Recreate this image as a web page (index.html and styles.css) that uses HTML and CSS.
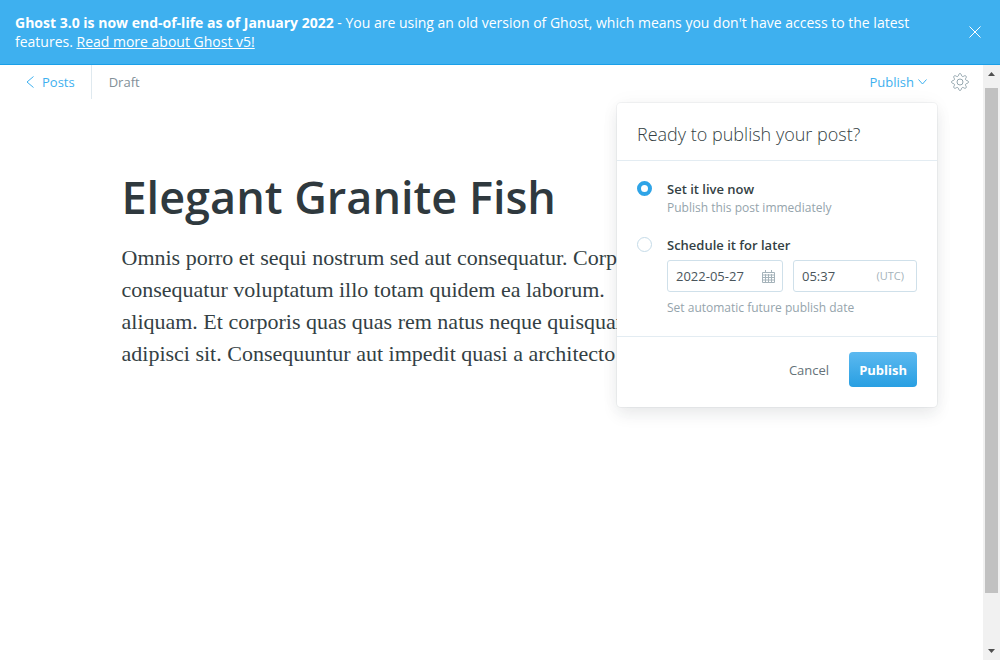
FILE: index.html
```html
<!DOCTYPE html>
<html lang="en">
<head>
<meta charset="utf-8">
<meta name="viewport" content="width=device-width, initial-scale=1">
<title>Elegant Granite Fish - Ghost</title>
<link rel="stylesheet" href="styles.css">
</head>
<body>
<aside class="alert">
  <p class="alert-text"><strong>Ghost 3.0 is now end-of-life as of January 2022</strong> - You are using an old version of Ghost, which means you don't have access to the latest features. <a href="#">Read more about Ghost v5!</a></p>
  <button class="alert-close" type="button" aria-label="Close">
    <svg width="12" height="12" viewBox="0 0 12 12"><path d="M.5.5l11 11M11.5.5l-11 11"/></svg>
  </button>
</aside>
<div class="viewport">
  <main class="editor">
    <header class="editor-header">
      <a class="back" href="#"><svg width="8" height="12" viewBox="0 0 8 12"><path d="M7.5.5L1 6l6.500 5.500"/></svg>Posts</a>
      <span class="status">Draft</span>
      <div class="publish-menu">
        <button class="publish-trigger" type="button" aria-expanded="true">Publish<svg width="9" height="6" viewBox="0 0 9 6"><path d="M.5.500l4 4.500 4-4.500"/></svg></button>
        <form class="dropdown">
          <h2 class="dropdown-title">Ready to publish your post?</h2>
          <div class="options">
            <div class="option">
              <input class="radio" type="radio" name="when" id="now" checked>
              <div class="option-body">
                <label class="option-label" for="now">Set it live now</label>
                <p class="option-desc">Publish this post immediately</p>
              </div>
            </div>
            <div class="option">
              <input class="radio" type="radio" name="when" id="later">
              <div class="option-body">
                <label class="option-label" for="later">Schedule it for later</label>
                <div class="datetime">
                  <div class="field">
                    <input type="text" value="2022-05-27" aria-label="Date">
                    <svg width="13" height="13" viewBox="0 0 13 13"><path d="M.5 2.500h12v10H.5zM.5 5h12M.5 7.500h12M.5 10h12M3.500 4v8.500M6.500 4v8.500M9.500 4v8.500M3.500 0v2.500M9.500 0v2.500"/></svg>
                  </div>
                  <div class="field field-time">
                    <input type="text" value="05:37" aria-label="Time">
                    <small class="zone">(UTC)</small>
                  </div>
                </div>
                <p class="option-desc">Set automatic future publish date</p>
              </div>
            </div>
          </div>
          <footer class="dropdown-footer">
            <button class="cancel" type="button">Cancel</button>
            <button class="publish" type="submit">Publish</button>
          </footer>
        </form>
      </div>
      <button class="settings" type="button" aria-label="Settings">
        <svg width="18" height="18" viewBox="0 0 24 24"><circle cx="12" cy="12" r="4"/><path d="M10 3.200C10.300 1.800 10.700.8 12 .8s1.700 1 2 2.400c.3 1.400 1.500 1.900 2.800 1.200 1.200-.8 2.200-1.200 3.100-.3s.5 1.900-.3 3.100c-.7 1.300-.2 2.400 1.200 2.700s2.400.8 2.400 2.100-1 1.800-2.400 2.100-1.900 1.400-1.200 2.700c.8 1.200 1.200 2.200.3 3.100s-1.900.5-3.100-.3c-1.300-.7-2.500-.2-2.800 1.200s-.7 2.400-2 2.400-1.700-1-2-2.400-1.500-1.900-2.800-1.200c-1.200.8-2.200 1.200-3.100.3s-.5-1.900.3-3.100c.7-1.300.2-2.400-1.200-2.700S.8 13.300.8 12s1-1.800 2.400-2.100 1.900-1.400 1.200-2.700c-.8-1.200-1.200-2.200-.3-3.100s1.900-.5 3.100.3c1.300.7 2.500.2 2.800-1.200z"/></svg>
      </button>
    </header>
    <article class="post">
      <h1 class="post-title">Elegant Granite Fish</h1>
      <p class="post-body">Omnis porro et sequi nostrum sed aut consequatur. Corporis<br>consequatur voluptatum illo totam quidem ea laborum.<br>aliquam. Et corporis quas quas rem natus neque quisquam<br>adipisci sit. Consequuntur aut impedit quasi a architecto</p>
    </article>
  </main>
  <div class="scrollbar" aria-hidden="true">
    <svg width="7" height="4" viewBox="0 0 7 4"><path d="M0 4L3.500 0 7 4z"/></svg>
    <div class="track"><div class="thumb"></div></div>
    <svg width="7" height="4" viewBox="0 0 7 4"><path d="M0 0l3.500 4L7 0z"/></svg>
  </div>
</div>
</body>
</html>
```
FILE: styles.css
```css
* { box-sizing: border-box; }
body {
  margin: 0;
  height: 100vh;
  display: flex;
  flex-direction: column;
  background: #fff;
  color: #343f44;
  font: 13px/18px "Open Sans", "Noto Sans", sans-serif;
}
p, h1, h2 { margin: 0; }
button { padding: 0; border: 0; background: none; font: inherit; cursor: pointer; }
svg { display: block; fill: none; stroke: currentColor; flex: none; }

.alert {
  display: flex;
  align-items: center;
  gap: 48px;
  padding: 13px 14px 13px 15px;
  background: #3eb0ef;
  border-bottom: 1px solid #1a9fe8;
  color: #fff;
  font-size: 14px;
  line-height: 19px;
}
.alert-text { flex: 1; }
.alert-text a { color: inherit; text-decoration: underline; }
.alert-close { padding: 0 5px; color: #fff; }

.viewport { flex: 1; display: flex; min-height: 0; }
.editor { flex: 1; min-width: 0; }
.editor-header {
  display: flex;
  align-items: center;
  height: 34px;
  padding: 0 14px 0 26px;
}
.back {
  display: flex;
  align-items: center;
  gap: 8px;
  align-self: stretch;
  padding-right: 16px;
  border-right: 1px solid #dfe9ef;
  color: #3eb0ef;
  text-decoration: none;
}
.status { padding-left: 17px; color: #839098; }
.publish-menu { position: relative; margin-left: auto; }
.publish-trigger { display: flex; align-items: center; gap: 4px; color: #3eb0ef; }
.settings { margin-left: 24px; color: #738a94; }

.dropdown {
  position: absolute;
  z-index: 2;
  top: 30px;
  right: -10px;
  width: 320px;
  background: #fff;
  border-radius: 4px;
  box-shadow: 0 0 0 1px rgba(99, 114, 130, .07), 0 8px 16px rgba(27, 39, 51, .08), 0 0 20px rgba(27, 39, 51, .04);
}
.dropdown-title {
  padding: 19px 20px 14px;
  border-bottom: 1px solid #e3ecf2;
  font-size: 18px;
  line-height: 24px;
  font-weight: 300;
}
.options { display: grid; gap: 18px; padding: 19px 20px 18px; }
.option { display: flex; gap: 15px; }
.option-body { flex: 1; }
.option-label { display: block; font-weight: 600; }
.option-desc { color: #95a4ac; font-size: 12px; line-height: 20px; }
.radio {
  appearance: none;
  flex: none;
  width: 15px;
  height: 15px;
  margin: 1px 0 0;
  border: 1px solid #c5dbe8;
  border-radius: 50%;
}
.radio:checked { border: 4px solid #2fa4e7; }
.datetime { display: grid; grid-template-columns: 116fr 124fr; gap: 10px; margin: 6px 0; }
.field {
  display: flex;
  align-items: center;
  min-width: 0;
  height: 32px;
  padding: 0 7px 0 8px;
  border: 1px solid #cfe0ea;
  border-radius: 3px;
  color: #a5b3ba;
}
.field-time { padding-right: 12px; }
.field input {
  flex: 1;
  width: 0;
  min-width: 0;
  padding: 0;
  border: 0;
  outline: 0;
  background: none;
  color: #4a555b;
  font: inherit;
}
.zone { font-size: 11px; }
.dropdown-footer {
  display: flex;
  justify-content: flex-end;
  align-items: center;
  gap: 20px;
  padding: 15px 20px 20px;
  border-top: 1px solid #e3ecf2;
}
.cancel { color: #657279; }
.publish {
  height: 35px;
  padding: 0 10px;
  border-radius: 4px;
  background: linear-gradient(#5cb9f0, #289fe2);
  color: #fff;
  font-weight: 700;
}

.post { max-width: 740px; margin: 0 auto; padding-top: 68px; }
.post-title { font-size: 45px; line-height: 60px; font-weight: 600; color: #2f393e; }
.post-body {
  margin-top: 15px;
  font-family: "Liberation Serif", serif;
  font-size: 22px;
  line-height: 32px;
  white-space: nowrap;
}

.scrollbar {
  width: 17px;
  display: flex;
  flex-direction: column;
  align-items: center;
  gap: 12px;
  padding: 7px 0;
  background: #f1f1f1;
}
.scrollbar svg { fill: #505050; stroke: none; }
.track { flex: 1; width: 13px; }
.thumb { height: 92%; background: #c1c1c1; }
```
